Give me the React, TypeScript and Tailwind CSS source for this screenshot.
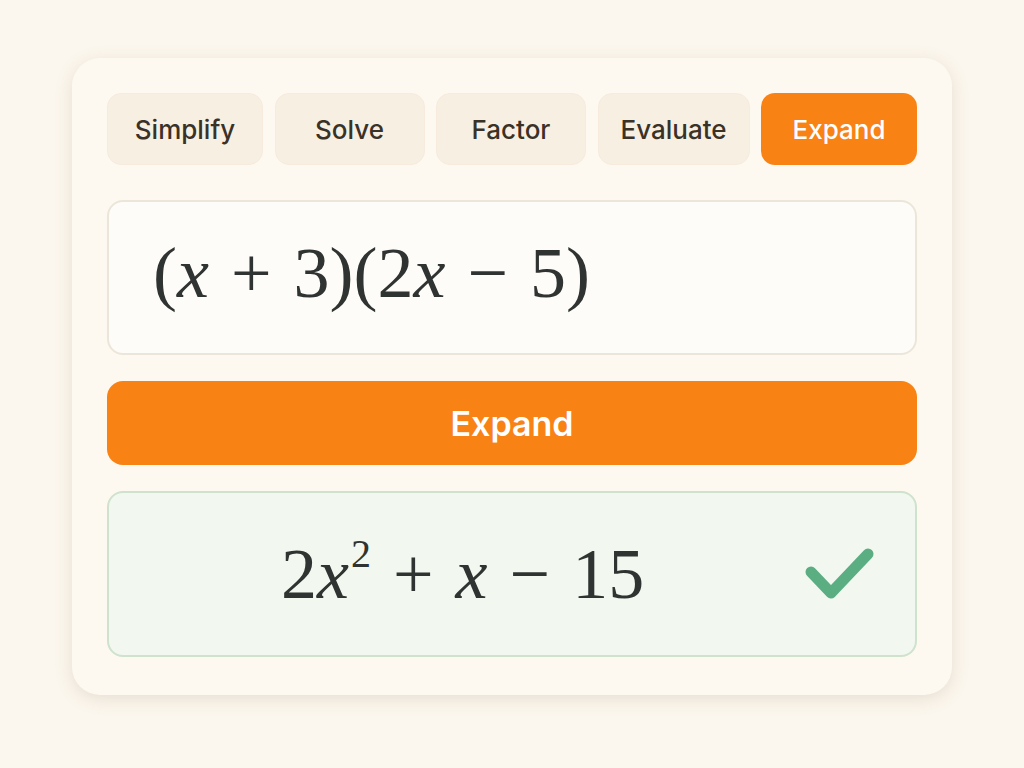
const tabs = [
  { label: "Simplify", w: "w-[156px]" },
  { label: "Solve", w: "w-[150px]" },
  { label: "Factor", w: "w-[150px]" },
  { label: "Evaluate", w: "w-[152px]" },
  { label: "Expand", w: "w-[156px]" },
];

const serif = "font-['Liberation_Serif','Times_New_Roman',serif]";

function Op({ children }: { children: React.ReactNode }) {
  return <span className="mx-[22px]">{children}</span>;
}

export default function App() {
  const active = "Expand";
  return (
    <div className="flex min-h-screen items-start justify-center bg-[#fcf7ee] pt-[58px] font-['Inter','Noto_Sans',sans-serif]">
      <div className="flex h-[637px] w-[880px] flex-col rounded-[28px] bg-[#fdf9f1] px-[35px] pt-[35px] shadow-[0_4px_18px_rgba(120,95,60,0.16)]">
        <div className="flex justify-between">
          {tabs.map((t) => (
            <button
              key={t.label}
              className={`flex h-[72px] ${t.w} items-center justify-center rounded-[14px] text-[26px] font-medium ${
                t.label === active
                  ? "bg-[#f98214] text-white"
                  : "border border-[#f6ebdd] bg-[#f8efe3] text-[#3a3227]"
              }`}
            >
              {t.label}
            </button>
          ))}
        </div>

        <div className="mt-[35px] flex h-[155px] items-center rounded-[16px] border-2 border-[#ece6da] bg-[#fefcf8] pb-[10px] pl-[44px]">
          <span className={`${serif} text-[72px] leading-none whitespace-nowrap text-[#2f3331]`}>
            (<i>x</i>
            <Op>+</Op>3)(2<i>x</i>
            <Op>−</Op>5)
          </span>
        </div>

        <button className="mt-[26px] flex h-[84px] items-center justify-center rounded-[16px] bg-[#f98214] text-[34px] font-semibold text-white">
          Expand
        </button>

        <div className="mt-[26px] flex h-[166px] items-center justify-between rounded-[16px] border-2 border-[#cfe2cd] bg-[#f2f7ef] pl-[172px] pr-[38px]">
          <span className={`${serif} text-[72px] leading-none whitespace-nowrap text-[#2f3331]`}>
            2<i>x</i>
            <sup className="relative -top-[31px] ml-[2px] text-[40px]">2</sup>
            <Op>+</Op>
            <i>x</i>
            <Op>−</Op>15
          </span>
          <svg width="74" height="60" viewBox="0 0 74 60" fill="none">
            <path
              d="M8 28 L28 49 L65 10"
              stroke="#5aae82"
              strokeWidth="11"
              strokeLinecap="round"
              strokeLinejoin="round"
            />
          </svg>
        </div>
      </div>
    </div>
  );
}
